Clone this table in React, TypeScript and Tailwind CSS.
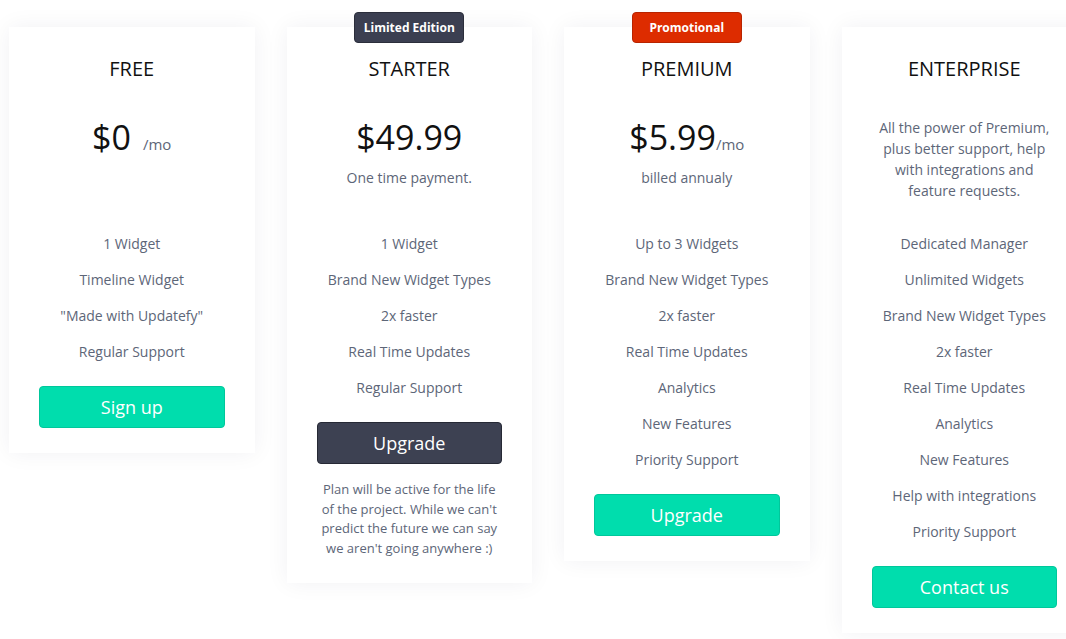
import { ReactNode } from 'react'

type Plan = {
  name: string
  badge?: { label: string; className: string }
  price?: ReactNode
  sub?: string
  description?: string
  features: string[]
  cta: string
  dark?: boolean
  note?: string
}

const PLANS: Plan[] = [
  {
    name: 'FREE',
    price: (
      <>
        <span>$0</span>
        <span className="ml-[12px] text-[15px] text-[#5d6678]">/mo</span>
      </>
    ),
    features: ['1 Widget', 'Timeline Widget', '"Made with Updatefy"', 'Regular Support'],
    cta: 'Sign up',
  },
  {
    name: 'STARTER',
    badge: { label: 'Limited Edition', className: 'bg-[#3b3f51] border-[#2b2e3b]' },
    price: <span>$49.99</span>,
    sub: 'One time payment.',
    features: ['1 Widget', 'Brand New Widget Types', '2x faster', 'Real Time Updates', 'Regular Support'],
    cta: 'Upgrade',
    dark: true,
    note: "Plan will be active for the life of the project. While we can't predict the future we can say we aren't going anywhere :)",
  },
  {
    name: 'PREMIUM',
    badge: { label: 'Promotional', className: 'bg-[#dd2c00] border-[#b82400]' },
    price: (
      <>
        <span>$5.99</span>
        <span className="text-[15px] text-[#5d6678]">/mo</span>
      </>
    ),
    sub: 'billed annualy',
    features: [
      'Up to 3 Widgets',
      'Brand New Widget Types',
      '2x faster',
      'Real Time Updates',
      'Analytics',
      'New Features',
      'Priority Support',
    ],
    cta: 'Upgrade',
  },
  {
    name: 'ENTERPRISE',
    description: 'All the power of Premium, plus better support, help with integrations and feature requests.',
    features: [
      'Dedicated Manager',
      'Unlimited Widgets',
      'Brand New Widget Types',
      '2x faster',
      'Real Time Updates',
      'Analytics',
      'New Features',
      'Help with integrations',
      'Priority Support',
    ],
    cta: 'Contact us',
  },
]

function PlanCard({ plan }: { plan: Plan }) {
  return (
    <div className="relative w-[245.5px] shrink-0 bg-white px-[30px] pt-[28px] pb-[25px] shadow-[0_0_22px_rgba(20,30,60,0.06)]">
      {plan.badge && (
        <div
          className={`absolute left-1/2 top-[-15px] w-[110px] -translate-x-1/2 rounded-[4px] border py-[5px] text-center text-[12px] font-bold leading-[19px] text-white whitespace-nowrap ${plan.badge.className}`}
        >
          {plan.badge.label}
        </div>
      )}
      <div className="h-[170px] text-center">
        <h2 className="text-[20px] leading-[28px] text-[#111]">{plan.name}</h2>
        {plan.price && (
          <div className="mt-[32px] flex h-[44px] items-baseline justify-center text-[34px] leading-[44px] text-[#111]">
            {plan.price}
          </div>
        )}
        {plan.sub && <p className="mt-[9px] text-[14px] leading-[20px] text-[#5d6678]">{plan.sub}</p>}
        {plan.description && (
          <p className="mt-[34px] text-[14px] leading-[21px] text-[#5d6678]">{plan.description}</p>
        )}
      </div>
      <ul className="text-center text-[14px] text-[#5d6678]">
        {plan.features.map((f) => (
          <li key={f} className="flex h-[36px] items-center justify-center">
            {f}
          </li>
        ))}
      </ul>
      <button
        className={`mt-[17px] h-[42px] w-full rounded-[4px] border text-[18px] text-white ${
          plan.dark ? 'bg-[#3d4152] border-[#262935]' : 'bg-[#00ddad] border-[#00c79b]'
        }`}
      >
        {plan.cta}
      </button>
      {plan.note && (
        <p className="mt-[16px] text-center text-[13px] leading-[19.5px] text-[#5d6678]">{plan.note}</p>
      )}
    </div>
  )
}

export default function App() {
  return (
    <div className="min-h-screen overflow-hidden bg-white font-['Open_Sans',sans-serif]">
      <div className="flex items-start gap-[32px] pl-[9px] pt-[27px]">
        {PLANS.map((p) => (
          <PlanCard key={p.name} plan={p} />
        ))}
      </div>
    </div>
  )
}
